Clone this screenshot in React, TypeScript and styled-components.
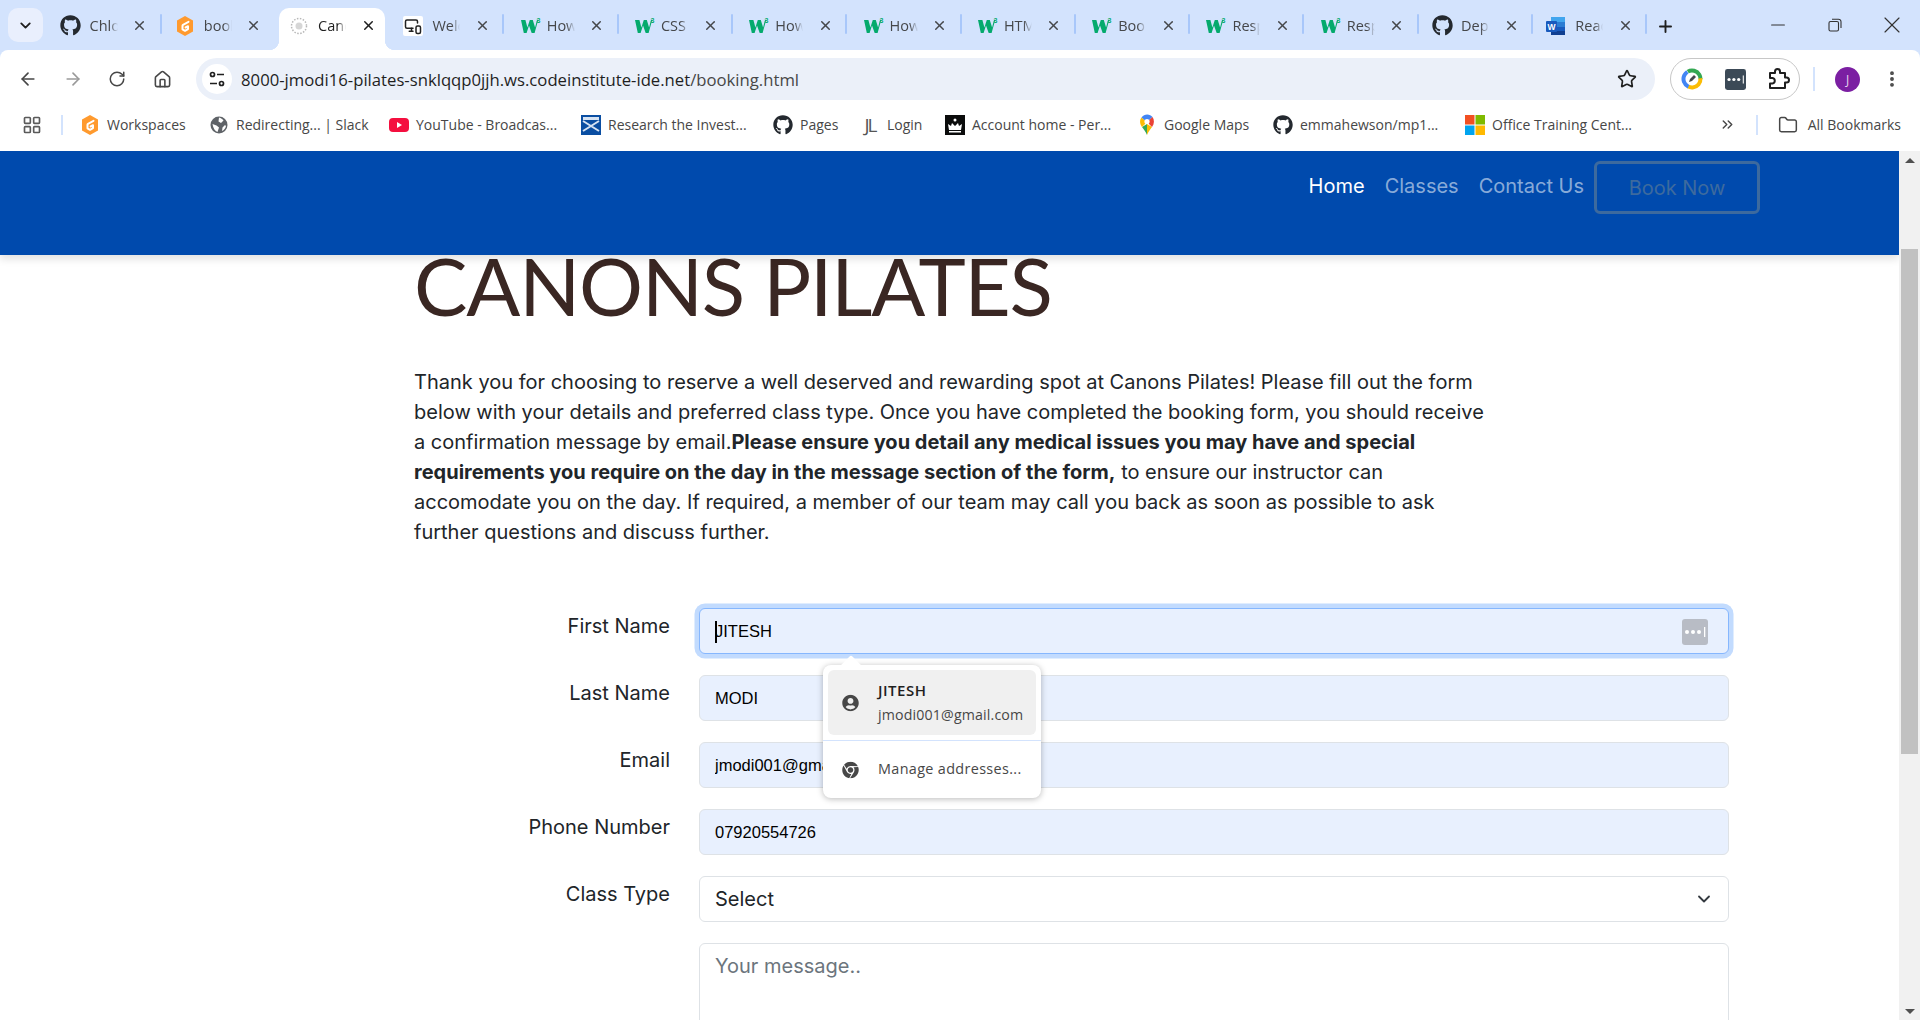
import styled, { createGlobalStyle } from "styled-components";
import { ArrowLeft, ArrowRight, ChevronDown, ChevronsRight, Folder, Home as HomeIcon, LayoutGrid, Minus, MoreVertical, Plus, RotateCw, Star, X, MonitorSmartphone } from "lucide-react";
import { FaGithub, FaChrome, FaUserCircle } from "react-icons/fa";

const GlobalStyle = createGlobalStyle`
  html, body { margin: 0; padding: 0; overflow: hidden; background: #fff; }
  * { box-sizing: border-box; }
`;

const chromeFont = `"Open Sans", "Noto Sans", "Liberation Sans", sans-serif`;
const pageFont = `Inter, "Liberation Sans", sans-serif`;

const W3Icon = () => (
  <svg width="22" height="20" viewBox="-3 0 22 20" overflow="visible">
    <path d="M1 4h4.400l2 7.500L9.800 4h3l2.300 7.500L17 4h1.200l-3.600 13h-2.900L9 9.500 6.600 17H3.800z" fill="#04aa6d" />
    <text x="16.500" y="6.500" fontSize="7" fontWeight="700" fontFamily="Liberation Sans" fill="#04aa6d">3</text>
  </svg>
);

const GitpodIcon = () => (
  <svg width="20" height="22" viewBox="0 0 20 22">
    <path d="M10 1l8 4.500v11L10 21l-8-4.500v-11z" fill="#ff9a2e" />
    <path d="M13.500 6.800L8 9.800a1 1 0 0 0-.5.9v3.600L10 15.800l3-1.700v-2.900l-2.400 1.300" fill="none" stroke="#fff" strokeWidth="2" strokeLinecap="round" strokeLinejoin="round" />
  </svg>
);

const LoadingFavicon = () => (
  <svg width="18" height="18" viewBox="0 0 18 18">
    <circle cx="9" cy="9" r="7.500" fill="none" stroke="#b8b8b8" strokeWidth="1.500" strokeDasharray="1.500 1.500" />
    <circle cx="9" cy="9" r="3.500" fill="#d6d6d6" />
  </svg>
);

const WordIcon = () => (
  <svg width="20" height="20" viewBox="0 0 20 20">
    <rect x="5" y="1" width="14" height="18" rx="1" fill="#2b7cd3" />
    <rect x="5" y="1" width="14" height="5" fill="#41a5ee" />
    <rect x="5" y="11" width="14" height="4" fill="#185abd" />
    <rect x="5" y="15" width="14" height="4" fill="#103f91" />
    <rect x="0" y="5" width="11" height="11" rx="1" fill="#185abd" />
    <text x="1.500" y="13.500" fontSize="8.500" fontWeight="700" fontFamily="Liberation Sans" fill="#fff">W</text>
  </svg>
);

const GlobeIcon = () => (
  <svg width="18" height="18" viewBox="0 0 18 18">
    <circle cx="9" cy="9" r="8.500" fill="#5f6368" />
    <path d="M9 1.500c2 .5 3.500 1.500 4.500 3L11 7 8.500 5.500zM2.500 8l4 1.500 2.500 2-1.500 4.500C5 15 3 12 2.500 8zM15 9l1 1c-.5 2.500-2 4-4 5l.5-3.500z" fill="#fff" />
  </svg>
);

const YoutubeIcon = () => (
  <svg width="20" height="16" viewBox="0 0 20 16">
    <rect x="0" y="1" width="20" height="14" rx="4" fill="#f40f3f" />
    <path d="M8 5l5 3-5 3z" fill="#fff" />
  </svg>
);

const HalifaxIcon = () => (
  <svg width="20" height="20" viewBox="0 0 20 20">
    <rect width="20" height="20" fill="#0a4ea2" />
    <path d="M2 6l16 10M18 6L2 16" stroke="#d6e3f3" strokeWidth="2" />
    <rect x="2" y="2" width="16" height="3" fill="#d6e3f3" />
  </svg>
);

const CrownIcon = () => (
  <svg width="20" height="20" viewBox="0 0 20 20">
    <rect width="20" height="20" fill="#0b0c0c" />
    <path d="M4 15l-1-6 3 2 1-3 3 3 3-3 1 3 3-2-1 6z" fill="#fff" />
    <circle cx="10" cy="5" r="1.500" fill="#fff" />
    <rect x="4" y="16" width="12" height="1.500" fill="#fff" />
  </svg>
);

const MapsIcon = () => (
  <svg width="16" height="22" viewBox="0 0 16 22">
    <path d="M8 21c-1-3-3-5-5-8l5-3z" fill="#34a853" />
    <path d="M8 21c1-3 3-5 5-8l-5-3z" fill="#fbbc04" />
    <path d="M3 13C.5 9.500.5 6 2.500 3.500L8 8z" fill="#fbbc04" />
    <path d="M2.500 3.500C5-.5 11-.5 13.500 3L8 8z" fill="#4285f4" />
    <path d="M13.500 3c2 3 2 6.500-.5 10L8 8z" fill="#ea4335" />
    <circle cx="8" cy="7.500" r="2.600" fill="#fff" />
  </svg>
);

const OfficeIcon = () => (
  <svg width="20" height="20" viewBox="0 0 20 20">
    <rect width="9.500" height="9.500" fill="#f25022" />
    <rect x="10.500" width="9.500" height="9.500" fill="#7fba00" />
    <rect y="10.500" width="9.500" height="9.500" fill="#00a4ef" />
    <rect x="10.500" y="10.500" width="9.500" height="9.500" fill="#ffb900" />
  </svg>
);

const TuneIcon = () => (
  <svg width="18" height="18" viewBox="0 0 18 18" fill="none" stroke="#1f1f1f" strokeWidth="1.700">
    <circle cx="4.500" cy="4.500" r="2" />
    <path d="M9 4.500h7M2 13.500h7" />
    <circle cx="13.500" cy="13.500" r="2" />
  </svg>
);

const LabsIcon = () => (
  <svg width="22" height="22" viewBox="0 0 22 22">
    <circle cx="11" cy="11" r="8.500" fill="none" stroke="#34a853" strokeWidth="4" strokeDasharray="18 36" transform="rotate(-120 11 11)" />
    <circle cx="11" cy="11" r="8.500" fill="none" stroke="#fbbc04" strokeWidth="4" strokeDasharray="18 36" transform="rotate(-5 11 11)" />
    <circle cx="11" cy="11" r="8.500" fill="none" stroke="#4285f4" strokeWidth="4" strokeDasharray="18 36" transform="rotate(115 11 11)" />
    <path d="M8 14l1-3 4-4 2 2-4 4z" fill="#45494d" />
  </svg>
);

const ExtensionIcon = () => (
  <svg width="22" height="22" viewBox="0 0 22 22" fill="none" stroke="#1f1f1f" strokeWidth="2" strokeLinejoin="round">
    <path d="M2 5h5V3.500a2.500 2.500 0 0 1 5 0V5h5v4.500h1.500a2.500 2.500 0 0 1 0 5H17V20H2v-4.500h2.500a2.800 2.800 0 0 0 0-5.500H2z" />
  </svg>
);

const LastPassDots = ({ size, bg, fg }: { size: number; bg: string; fg: string }) => (
  <svg width={size} height={size} viewBox="0 0 26 26">
    <rect width="26" height="26" rx="3" fill={bg} />
    <circle cx="5" cy="13" r="2" fill={fg} />
    <circle cx="11" cy="13" r="2" fill={fg} />
    <circle cx="17" cy="13" r="2" fill={fg} />
    <rect x="22" y="8" width="1.300" height="10" fill={fg} />
  </svg>
);

const tabs = [
  { key: "t1", icon: <FaGithub size={21} color="#24292f" />, title: "Chloe" },
  { key: "t2", icon: <GitpodIcon />, title: "booking.html" },
  { key: "t3", icon: <LoadingFavicon />, title: "Canons Pilates", active: true },
  { key: "t4", icon: <WebTabIcon><MonitorSmartphone size={18} color="#222" /></WebTabIcon>, title: "Welcome" },
  { key: "t5", icon: <W3Icon />, title: "How To" },
  { key: "t6", icon: <W3Icon />, title: "CSS" },
  { key: "t7", icon: <W3Icon />, title: "How To" },
  { key: "t8", icon: <W3Icon />, title: "How To" },
  { key: "t9", icon: <W3Icon />, title: "HTML" },
  { key: "t10", icon: <W3Icon />, title: "Booking" },
  { key: "t11", icon: <W3Icon />, title: "Responsive" },
  { key: "t12", icon: <W3Icon />, title: "Responsive" },
  { key: "t13", icon: <FaGithub size={21} color="#24292f" />, title: "Deploy" },
  { key: "t14", icon: <WordIcon />, title: "Read" },
];

const bookmarks = [
  { label: "Workspaces", icon: <GitpodIcon />, w: 129 },
  { label: "Redirecting... | Slack", icon: <GlobeIcon />, w: 180 },
  { label: "YouTube - Broadcas...", icon: <YoutubeIcon />, w: 192 },
  { label: "Research the Invest...", icon: <HalifaxIcon />, w: 192 },
  { label: "Pages", icon: <FaGithub size={20} color="#24292f" />, w: 87 },
  { label: "Login", icon: <JLMark>JL</JLMark>, w: 85 },
  { label: "Account home - Per...", icon: <CrownIcon />, w: 192 },
  { label: "Google Maps", icon: <MapsIcon />, w: 136 },
  { label: "emmahewson/mp1...", icon: <FaGithub size={20} color="#24292f" />, w: 192 },
  { label: "Office Training Cent...", icon: <OfficeIcon />, w: 180 },
];

const fields = [
  { label: "Last Name", value: "MODI" },
  { label: "Email", value: "jmodi001@gmail.com" },
  { label: "Phone Number", value: "07920554726" },
];

export default function App() {
  return (
    <Viewport>
      <GlobalStyle />
      <TabStrip>
        <TabSearch><ChevronDown size={17} strokeWidth={2.6} /></TabSearch>
        <TabList>
          {tabs.map((t, i) => (
            <Tab key={t.key} $active={!!t.active}>
              <Favicon>{t.icon}</Favicon>
              <TabTitle $active={!!t.active}>{t.title}</TabTitle>
              <TabClose $active={!!t.active}><X size={15} strokeWidth={2.4} /></TabClose>
              {!t.active && !tabs[i + 1]?.active && <TabDivider />}
            </Tab>
          ))}
        </TabList>
        <NewTab><Plus size={19} strokeWidth={2.4} /></NewTab>
        <WindowControls>
          <WindowButton><Minus size={22} strokeWidth={1.100} /></WindowButton>
          <WindowButton>
            <svg width="14" height="14" viewBox="0 0 14 14" fill="none" stroke="#333" strokeWidth="1.100">
              <rect x="1" y="3.500" width="9.500" height="9.500" rx="1.500" />
              <path d="M4 1.200h6.500a2.500 2.500 0 0 1 2.500 2.500V10" />
            </svg>
          </WindowButton>
          <WindowButton><X size={28} strokeWidth={1} /></WindowButton>
        </WindowControls>
      </TabStrip>

      <Toolbar>
        <NavButtons>
          <ToolButton><ArrowLeft size={20} strokeWidth={2} /></ToolButton>
          <ToolButton $muted><ArrowRight size={20} strokeWidth={2} /></ToolButton>
          <ToolButton><RotateCw size={18} strokeWidth={2} /></ToolButton>
          <ToolButton><HomeIcon size={19} strokeWidth={2} /></ToolButton>
        </NavButtons>
        <AddressBar>
          <SiteChip><TuneIcon /></SiteChip>
          <Url>8000-jmodi16-pilates-snklqqp0jjh.ws.codeinstitute-ide.net<UrlPath>/booking.html</UrlPath></Url>
          <Star size={20} strokeWidth={2} color="#1f1f1f" />
        </AddressBar>
        <ExtensionPill>
          <LabsIcon />
          <LastPassDots size={21} bg="#3c4a57" fg="#fff" />
          <ExtensionIcon />
        </ExtensionPill>
        <ToolbarDivider />
        <Avatar>J</Avatar>
        <MenuDots><MoreVertical size={20} strokeWidth={2.6} /></MenuDots>
      </Toolbar>

      <BookmarksBar>
        <AppsIcon><LayoutGrid size={20} strokeWidth={2} /></AppsIcon>
        <BarDivider />
        <BookmarkList>
          {bookmarks.map((b) => (
            <Bookmark key={b.label} $w={b.w}>
              <BookmarkIcon>{b.icon}</BookmarkIcon>
              <span>{b.label}</span>
            </Bookmark>
          ))}
        </BookmarkList>
        <BarEnd>
          <ChevronsRight size={17} strokeWidth={2} />
          <EndDivider />
          <AllBookmarks><Folder size={20} strokeWidth={1.800} /><span>All Bookmarks</span></AllBookmarks>
        </BarEnd>
      </BookmarksBar>

      <PageArea>
        <Main>
          <Navbar>
            <NavLink $current>Home</NavLink>
            <NavLink>Classes</NavLink>
            <NavLink>Contact Us</NavLink>
            <BookButton>Book Now</BookButton>
          </Navbar>
          <Content>
            <Heading>CANONS PILATES</Heading>
            <Intro>
              Thank you for choosing to reserve a well deserved and rewarding spot at Canons Pilates! Please fill out the form
              below with your details and preferred class type. Once you have completed the booking form, you should receive
              a confirmation message by email.<strong>Please ensure you detail any medical issues you may have and special
              requirements you require on the day in the message section of the form,</strong> to ensure our instructor can
              accomodate you on the day. If required, a member of our team may call you back as soon as possible to ask
              further questions and discuss further.
            </Intro>
            <Form>
              <Row>
                <Label>First Name</Label>
                <FieldWrap>
                  <TextInput $focused readOnly defaultValue="JITESH" />
                  <Caret />
                  <FieldBadge><LastPassDots size={26} bg="#b8bcc5" fg="#fff" /></FieldBadge>
                </FieldWrap>
              </Row>
              {fields.map((f) => (
                <Row key={f.label}>
                  <Label>{f.label}</Label>
                  <FieldWrap><TextInput readOnly defaultValue={f.value} /></FieldWrap>
                </Row>
              ))}
              <Row>
                <Label>Class Type</Label>
                <FieldWrap>
                  <SelectBox defaultValue="select"><option value="select">Select</option></SelectBox>
                  <SelectChevron><ChevronDown size={20} strokeWidth={2.2} /></SelectChevron>
                </FieldWrap>
              </Row>
              <Row>
                <Label />
                <FieldWrap><MessageBox placeholder="Your message.." /></FieldWrap>
              </Row>
            </Form>
          </Content>
          <AutofillPopup>
            <PopupArrow />
            <PopupItem $hover>
              <PopupIcon><FaUserCircle size={17} color="#474747" /></PopupIcon>
              <div>
                <PopupName>JITESH</PopupName>
                <PopupEmail>jmodi001@gmail.com</PopupEmail>
              </div>
            </PopupItem>
            <PopupDivider />
            <ManageItem>
              <PopupIcon><FaChrome size={17} color="#474747" /></PopupIcon>
              <ManageText>Manage addresses...</ManageText>
            </ManageItem>
          </AutofillPopup>
        </Main>
        <Scrollbar>
          <ScrollArrow $up />
          <ScrollTrack><ScrollThumb /></ScrollTrack>
          <ScrollArrow />
        </Scrollbar>
      </PageArea>
    </Viewport>
  );
}

function JLMark({ children }: { children: string }) {
  return <JLText>{children}</JLText>;
}

function WebTabIcon({ children }: { children: React.ReactNode }) {
  return <WebIconBox>{children}</WebIconBox>;
}

const Viewport = styled.div`
  width: 1920px;
  height: 1020px;
  display: flex;
  flex-direction: column;
  overflow: hidden;
  background: #d3e3fd;
  font-family: ${chromeFont};
`;

const TabStrip = styled.div`
  height: 50px;
  flex-shrink: 0;
  display: flex;
  align-items: flex-end;
`;

const TabSearch = styled.div`
  width: 35px;
  height: 34px;
  margin: 0 0 8px 8px;
  border-radius: 10px;
  background: #e9effd;
  color: #1f1f1f;
  display: flex;
  align-items: center;
  justify-content: center;
`;

const TabList = styled.div`
  display: flex;
  align-items: flex-end;
  margin-left: 7.500px;
`;

const Tab = styled.div<{ $active: boolean }>`
  position: relative;
  width: 106px;
  height: 42px;
  margin-right: 8.300px;
  padding: 0 9.500px 7px 9px;
  display: flex;
  align-items: center;
  border-radius: 10px 10px 0 0;
  background: ${({ $active }) => ($active ? "#fff" : "transparent")};

  ${({ $active }) =>
    $active &&
    `
    &::before, &::after {
      content: "";
      position: absolute;
      bottom: 0;
      width: 10px;
      height: 10px;
    }
    &::before { left: -10px; background: radial-gradient(circle at 0 0, transparent 10px, #fff 10.500px); }
    &::after { right: -10px; background: radial-gradient(circle at 100% 0, transparent 10px, #fff 10.500px); }
  `}
`;

const Favicon = styled.div`
  width: 22px;
  flex-shrink: 0;
  display: flex;
  align-items: center;
  justify-content: center;
`;

const WebIconBox = styled.div`
  width: 20px;
  height: 20px;
  border-radius: 2px;
  background: #fff;
  display: flex;
  align-items: center;
  justify-content: center;
`;

const TabTitle = styled.div<{ $active: boolean }>`
  width: 28px;
  margin-left: 8px;
  overflow: hidden;
  white-space: nowrap;
  font-size: 14.500px;
  color: ${({ $active }) => ($active ? "#1f1f1f" : "#45474a")};
  -webkit-mask-image: linear-gradient(90deg, #000 70%, transparent 100%);
  mask-image: linear-gradient(90deg, #000 70%, transparent 100%);
`;

const TabClose = styled.div<{ $active: boolean }>`
  margin-left: auto;
  display: flex;
  color: ${({ $active }) => ($active ? "#1f1f1f" : "#45474a")};
`;

const TabDivider = styled.div`
  position: absolute;
  right: -5px;
  top: 6px;
  width: 2px;
  height: 20px;
  border-radius: 1px;
  background: #a8c7fa;
`;

const NewTab = styled.div`
  margin: 0 0 14px 5px;
  display: flex;
  color: #1f1f1f;
`;

const WindowControls = styled.div`
  margin-left: auto;
  height: 50px;
  display: flex;
`;

const WindowButton = styled.div`
  width: 57px;
  display: flex;
  align-items: center;
  justify-content: center;
  color: #333;
`;

const Toolbar = styled.div`
  height: 50px;
  flex-shrink: 0;
  display: flex;
  align-items: center;
  padding-top: 8px;
  background: #fff;
  border-radius: 8px 8px 0 0;
`;

const NavButtons = styled.div`
  display: flex;
  gap: 8.700px;
  margin-left: 10px;
`;

const ToolButton = styled.div<{ $muted?: boolean }>`
  width: 36px;
  height: 36px;
  display: flex;
  align-items: center;
  justify-content: center;
  color: ${({ $muted }) => ($muted ? "#9a9a9a" : "#474747")};
`;

const AddressBar = styled.div`
  width: 1459px;
  height: 42px;
  margin-left: 16px;
  padding: 0 18px 0 6px;
  display: flex;
  align-items: center;
  border-radius: 21px;
  background: #ebf0f9;
`;

const SiteChip = styled.div`
  width: 30px;
  height: 30px;
  border-radius: 50%;
  background: #fff;
  display: flex;
  align-items: center;
  justify-content: center;
`;

const Url = styled.div`
  flex: 1;
  margin-left: 9px;
  font-size: 16.700px;
  color: #1f1f1f;
`;

const UrlPath = styled.span`
  color: #474747;
`;

const ExtensionPill = styled.div`
  width: 130px;
  height: 42px;
  margin-left: 15px;
  padding: 0 9px 0 10px;
  display: flex;
  align-items: center;
  justify-content: space-between;
  border: 1px solid #c7c7c7;
  border-radius: 21px;
`;

const ToolbarDivider = styled.div`
  width: 2px;
  height: 24px;
  margin-left: 13px;
  background: #d3e3fd;
`;

const Avatar = styled.div`
  width: 25px;
  height: 25px;
  margin-left: 20px;
  border-radius: 50%;
  background: #7b1fa2;
  color: #e6d5ee;
  font-size: 12px;
  display: flex;
  align-items: center;
  justify-content: center;
`;

const MenuDots = styled.div`
  margin-left: 22px;
  display: flex;
  color: #474747;
`;

const BookmarksBar = styled.div`
  height: 51px;
  flex-shrink: 0;
  display: flex;
  align-items: center;
  padding-bottom: 2px;
  background: #fff;
  font-size: 14px;
  color: #474747;
`;

const AppsIcon = styled.div`
  margin-left: 22px;
  display: flex;
  color: #5a5a5a;
`;

const BarDivider = styled.div`
  width: 2px;
  height: 20px;
  margin: 0 17px 0 19px;
  background: #d3e3fd;
`;

const EndDivider = styled(BarDivider)`
  margin: 0 20px;
`;

const BookmarkList = styled.div`
  display: flex;
`;

const Bookmark = styled.div<{ $w: number }>`
  width: ${({ $w }) => $w}px;
  display: flex;
  align-items: center;
  white-space: nowrap;
`;

const BookmarkIcon = styled.div`
  width: 20px;
  height: 22px;
  margin-right: 7px;
  display: flex;
  align-items: center;
  justify-content: center;
`;

const JLText = styled.span`
  font-size: 19px;
  letter-spacing: -2px;
  color: #555;
`;

const BarEnd = styled.div`
  margin-left: auto;
  padding-right: 19px;
  display: flex;
  align-items: center;
  color: #474747;
`;

const AllBookmarks = styled.div`
  display: flex;
  align-items: center;
  gap: 10px;
`;

const PageArea = styled.div`
  flex: 1;
  min-height: 0;
  display: flex;
  background: #fff;
`;

const Main = styled.main`
  position: relative;
  flex: 1;
  min-width: 0;
  overflow: hidden;
  font-family: ${pageFont};
  color: #212529;
`;

const Navbar = styled.nav`
  position: relative;
  z-index: 2;
  height: 104px;
  padding: 10px 139px 0 0;
  display: flex;
  justify-content: flex-end;
  align-items: flex-start;
  background: #004aad;
  box-shadow: 0 4px 8px rgba(0, 0, 0, 0.12);
`;

const NavLink = styled.a<{ $current?: boolean }>`
  margin-right: 20px;
  padding-top: 13px;
  font-size: 20px;
  line-height: 24px;
  color: ${({ $current }) => ($current ? "#fff" : "rgba(255, 255, 255, 0.55)")};

  &:nth-child(3) {
    margin-right: 10px;
  }
`;

const BookButton = styled.div`
  width: 166px;
  height: 53px;
  display: flex;
  align-items: center;
  justify-content: center;
  border: 3px solid #3d6a9e;
  border-radius: 6px;
  font-size: 20px;
  color: #3d6a9e;
`;

const Content = styled.div`
  padding-left: 414px;
`;

const Heading = styled.h1`
  margin: 0;
  height: 112px;
  font-family: "Lato", "Liberation Sans", sans-serif;
  font-size: 80px;
  line-height: 60px;
  letter-spacing: -1.200px;
  font-weight: 400;
  color: #3a2723;
  white-space: nowrap;
`;

const Intro = styled.p`
  width: 1080px;
  margin: 0 0 61px;
  font-size: 20px;
  line-height: 30px;
`;

const Form = styled.form`
  width: 1315px;
  display: flex;
  flex-direction: column;
  gap: 21px;
`;

const Row = styled.div`
  display: grid;
  grid-template-columns: 256px 1fr;
  column-gap: 29px;
`;

const Label = styled.label`
  padding-top: 3px;
  text-align: right;
  font-size: 20px;
  line-height: 30px;
`;

const FieldWrap = styled.div`
  position: relative;
`;

const TextInput = styled.input<{ $focused?: boolean }>`
  display: block;
  width: 100%;
  height: 46px;
  padding: 0 15px;
  border-radius: 6px;
  border: 1px solid ${({ $focused }) => ($focused ? "#86b7fe" : "#dee2e6")};
  background: #e8f0fe;
  box-shadow: ${({ $focused }) => ($focused ? "0 0 0 4.500px #c2dbfe" : "none")};
  font-family: "Liberation Sans", Arial, sans-serif;
  font-size: 16.500px;
  color: #000;
  outline: none;
`;

const Caret = styled.span`
  position: absolute;
  left: 16px;
  top: 13px;
  width: 1.500px;
  height: 22px;
  background: #000;
`;

const FieldBadge = styled.div`
  position: absolute;
  right: 21px;
  top: 11px;
  display: flex;
`;

const SelectBox = styled.select`
  display: block;
  width: 100%;
  height: 46px;
  padding: 0 15px;
  appearance: none;
  border: 1px solid #dee2e6;
  border-radius: 6px;
  background: #fff;
  font-family: ${pageFont};
  font-size: 20px;
  color: #212529;
  outline: none;
`;

const SelectChevron = styled.span`
  position: absolute;
  right: 15px;
  top: 13px;
  display: flex;
  color: #343a40;
  pointer-events: none;
`;

const MessageBox = styled.textarea`
  display: block;
  width: 100%;
  height: 150px;
  padding: 7px 15px;
  border: 1px solid #dee2e6;
  border-radius: 6px;
  font-family: ${pageFont};
  font-size: 20px;
  line-height: 30px;
  resize: none;
  outline: none;

  &::placeholder {
    color: #6c757d;
  }
`;

const AutofillPopup = styled.div`
  position: absolute;
  z-index: 3;
  left: 823px;
  top: 514px;
  width: 218px;
  height: 133px;
  padding: 5px;
  border-radius: 8px;
  background: #fff;
  box-shadow: 0 1px 6px rgba(0, 0, 0, 0.28);
  font-family: ${chromeFont};
`;

const PopupArrow = styled.div`
  position: absolute;
  left: 21px;
  top: -7px;
  width: 14px;
  height: 14px;
  background: #fff;
  transform: rotate(45deg);
  border-radius: 2px 0 0 0;
`;

const PopupItem = styled.div<{ $hover?: boolean }>`
  position: relative;
  height: 65px;
  padding-left: 50px;
  display: flex;
  align-items: center;
  border-radius: 6px;
  background: ${({ $hover }) => ($hover ? "#f0f0f0" : "transparent")};
`;

const PopupIcon = styled.div`
  position: absolute;
  left: 14px;
  top: 50%;
  transform: translateY(-50%);
  display: flex;
`;

const PopupName = styled.div`
  font-size: 15px;
  line-height: 21px;
  letter-spacing: 0.5px;
  font-weight: 600;
  color: #1f1f1f;
`;

const PopupEmail = styled.div`
  margin-top: 4px;
  font-size: 14.200px;
  line-height: 20px;
  letter-spacing: 0.150px;
  color: #474747;
  white-space: nowrap;
`;

const ManageText = styled.div`
  margin-bottom: 2px;
  font-size: 14.400px;
  line-height: 20px;
  letter-spacing: 0.350px;
  color: #474747;
  white-space: nowrap;
`;

const PopupDivider = styled.div`
  height: 1px;
  margin: 5px -5px 0;
  background: #d3e3fd;
`;

const ManageItem = styled(PopupItem)`
  height: 57px;
`;

const Scrollbar = styled.div`
  width: 21px;
  flex-shrink: 0;
  display: flex;
  flex-direction: column;
  background: #f1f1f1;
`;

const ScrollArrow = styled.div<{ $up?: boolean }>`
  height: 18px;
  flex-shrink: 0;
  display: flex;
  align-items: center;
  justify-content: center;

  &::before {
    content: "";
    border-left: 5px solid transparent;
    border-right: 5px solid transparent;
    ${({ $up }) => ($up ? "border-bottom: 5px solid #505050;" : "border-top: 5px solid #505050;")}
  }
`;

const ScrollTrack = styled.div`
  flex: 1;
  padding: 80px 2px 0;
`;

const ScrollThumb = styled.div`
  height: 505px;
  background: #c1c1c1;
`;
